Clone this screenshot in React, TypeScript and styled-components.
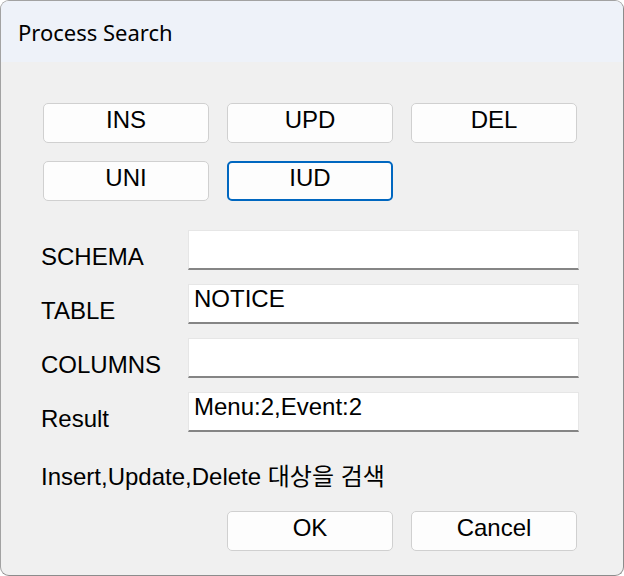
import React from 'react';
import styled, { createGlobalStyle } from 'styled-components';

type ButtonProps = {
    $focused?: boolean
}

const GlobalStyle = createGlobalStyle`
    html, body {
        margin: 0;
        padding: 0;
        background: #ffffff;
    }
    * {
        box-sizing: border-box;
    }
`

const fields = [
    { label: 'SCHEMA', value: '' },
    { label: 'TABLE', value: 'NOTICE' },
    { label: 'COLUMNS', value: '' },
    { label: 'Result', value: 'Menu:2,Event:2' },
]

export default function App() {
    return (
        <>
            <GlobalStyle />
            <StyledWindow>
                <StyledTitleBar>Process Search</StyledTitleBar>
                <StyledBody>
                    <StyledButtonGrid>
                        <Button>INS</Button>
                        <Button>UPD</Button>
                        <Button>DEL</Button>
                        <Button>UNI</Button>
                        <Button $focused>IUD</Button>
                    </StyledButtonGrid>

                    <StyledForm>
                        {fields.map(f => (
                            <StyledRow key={f.label}>
                                <StyledLabel>{f.label}</StyledLabel>
                                <StyledInput>{f.value}</StyledInput>
                            </StyledRow>
                        ))}
                    </StyledForm>

                    <StyledDescription>Insert,Update,Delete 대상을 검색</StyledDescription>

                    <StyledFooter>
                        <Button>OK</Button>
                        <Button>Cancel</Button>
                    </StyledFooter>
                </StyledBody>
            </StyledWindow>
        </>
    );
}

const StyledWindow = styled.div`
    width: 624px;
    height: 576px;
    display: flex;
    flex-direction: column;
    background-color: #f0f0f0;
    border: 1px solid #a2a2a2;
    border-right-color: #8c8c8c;
    border-bottom-color: #8c8c8c;
    border-radius: 9px;
    overflow: hidden;
`

const StyledTitleBar = styled.div`
    height: 61px;
    flex-shrink: 0;
    display: flex;
    align-items: center;
    padding: 0 0 0 17px;
    background-color: #eef2f9;
    color: #000;
    font-family: "Noto Sans", "Open Sans", sans-serif;
    font-size: 22px;
    line-height: 1;
`

const StyledBody = styled.div`
    flex: 1;
    display: flex;
    flex-direction: column;
    padding: 41px 46px 0 40px;
    font-family: "Liberation Sans", Arial, "Noto Sans CJK KR", sans-serif;
    font-size: 24px;
    color: #000;
`

const StyledButtonGrid = styled.div`
    display: grid;
    grid-template-columns: repeat(3, 166px);
    column-gap: 18px;
    row-gap: 18px;
    margin-left: 2px;
`

const Button = styled.button<ButtonProps>`
    width: 166px;
    height: 40px;
    display: flex;
    align-items: center;
    justify-content: center;
    padding: 0 0 6px;
    background-color: #fdfdfd;
    border: ${props => props.$focused ? '2px solid #0067c0' : '1px solid #d0d0d0'};
    border-radius: 5px;
    font-family: "Liberation Sans", Arial, sans-serif;
    font-size: 24px;
    color: #000;
`

const StyledForm = styled.div`
    display: flex;
    flex-direction: column;
    gap: 14px;
    margin-top: 29px;
`

const StyledRow = styled.div`
    display: grid;
    grid-template-columns: 147px 391px;
    height: 40px;
`

const StyledLabel = styled.div`
    line-height: 40px;
    padding-top: 7px;
`

const StyledInput = styled.div`
    height: 40px;
    padding: 1px 0 0 5px;
    background-color: #ffffff;
    border: 1px solid #e6e6e6;
    border-bottom: 2px solid #858585;
    line-height: 26px;
`

const StyledDescription = styled.div`
    margin-top: 31px;
    line-height: 28px;
    font-family: "Liberation Sans", Arial, "Noto Sans CJK KR", sans-serif;
`

const StyledFooter = styled.div`
    display: flex;
    justify-content: flex-end;
    gap: 18px;
    margin-top: 20px;
`
